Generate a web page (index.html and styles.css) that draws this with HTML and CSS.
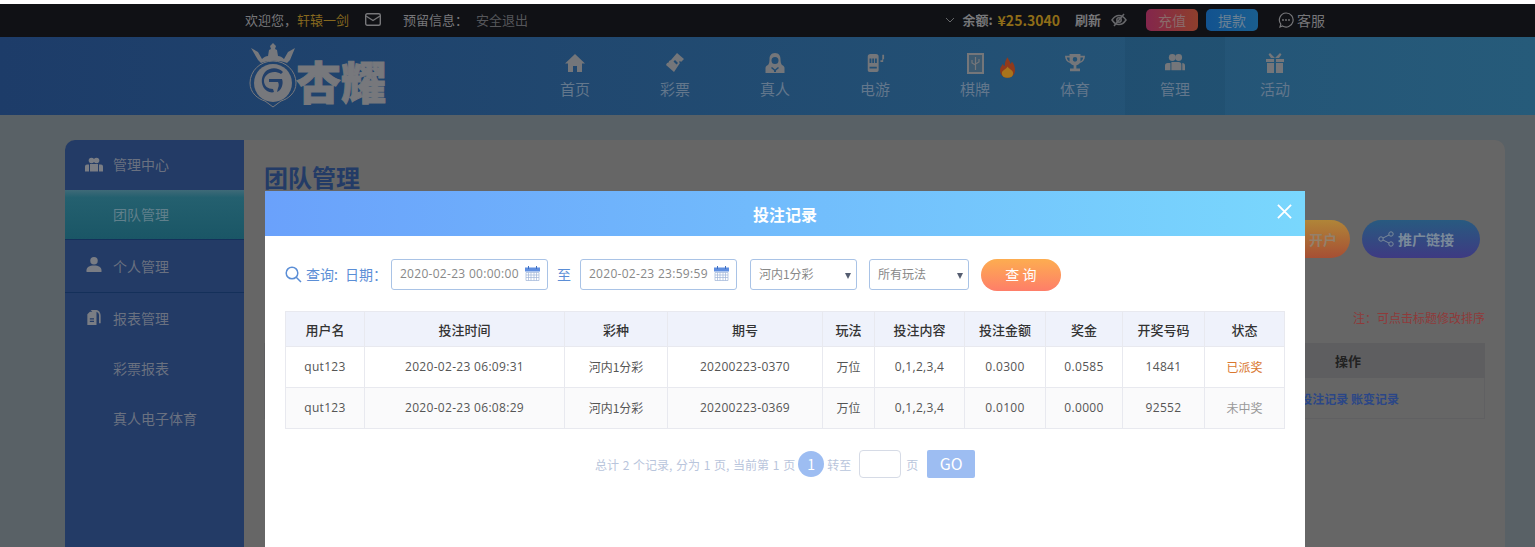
FILE: index.html
```html
<!DOCTYPE html>
<html lang="zh-CN">
<head>
    <meta charset="UTF-8">
    <title>团队管理</title>
    <link rel="stylesheet" href="styles.css">
</head>
<body>
    <!-- 顶部信息条 -->
    <div class="topbar">
        <span class="welcome">欢迎您，<em>轩辕一剑</em></span>
        <svg class="mail" viewBox="0 0 16 13"><rect x="0.7" y="0.7" width="14.6" height="11.6" rx="1.5"/><path d="M1 3l7 4.500L15 3"/></svg>
        <span class="reserve">预留信息：</span>
        <span class="logout">安全退出</span>
        <div class="account">
            <svg class="chev" viewBox="0 0 10 6"><path d="M1 1l4 4 4-4"/></svg>
            <b class="bal-label">余额:</b>
            <b class="money">¥25.3040</b>
            <b class="refresh">刷新</b>
            <svg class="eye" viewBox="0 0 16 14"><path d="M1 7c2-3 4.500-4.500 7-4.500S13 4 15 7c-2 3-4.500 4.500-7 4.500S3 10 1 7z"/><circle cx="8" cy="7" r="2.200"/><path d="M13 1L3 13"/></svg>
            <span class="btn-pay">充值</span>
            <span class="btn-draw">提款</span>
            <svg class="chat" viewBox="0 0 16 16"><path d="M8 1a7 7 0 1 1-3.500 13L2 15l.8-2.800A7 7 0 0 1 8 1z"/><circle class="dot" cx="5" cy="8" r="0.900"/><circle class="dot" cx="8" cy="8" r="0.900"/><circle class="dot" cx="11" cy="8" r="0.900"/></svg>
            <span class="service">客服</span>
        </div>
    </div>

    <!-- 导航 -->
    <div class="nav">
        <div class="logo">
            <svg class="emblem" viewBox="0 0 48 66">
                <path class="fill" d="M2 6l7 4 4 7c2-2 4-3 6-3l1-6 2-1-1-3 3-3 3 3-1 3 2 1 1 6c2 0 4 1 6 3l4-7 7-4-5 12-3 3c-8-3-18-3-26 0l-3-3z"/>
                <path class="ring" d="M24 19c13 0 23 10 23 22 0 10-8 16-15 18l-8 6-8-6C9 57 1 51 1 41c0-12 10-22 23-22z"/>
                <circle class="fill" cx="24" cy="41" r="19"/>
                <path class="hole" d="M34 30c-5-5-13-5-18 0-5 6-4 15 2 19 2 1 5 2 7 1l-1-3c-5 0-9-3-9-8 0-7 9-12 17-7zM20 37h13c2 5-1 12-5 13l1-4c1-2 1-4 0-6h-9z"/>
            </svg>
            <span class="logo-text">杏耀</span>
        </div>
        <a class="nav-item">
            <svg viewBox="0 0 20 20"><path d="M10 1L0 10.500h3V19h5v-6h4v6h5v-8.500h3z"/></svg>
            <span>首页</span>
        </a>
        <a class="nav-item">
            <svg viewBox="0 0 20 20"><path d="M12 0l7 6-3 3-1-1-1 1 1 1-6 9-8-7 1-2c1.500 0 2-1 2-2l2-1zm-2 7l-1.500 1.500 3 3L13 10z" fill-rule="evenodd"/></svg>
            <span>彩票</span>
        </a>
        <a class="nav-item">
            <svg viewBox="0 0 20 20"><path fill-rule="evenodd" d="M10 0c-4 0-5.500 3-5.500 6 0 3-.5 5-1.500 6-1.500.5-2.500 1.500-2.500 3v5h19v-5c0-1.500-1-2.500-2.500-3-1-1-1.500-3-1.500-6 0-3-1.500-6-5.500-6zm0 4a3.500 3.500 0 1 1 0 7 3.500 3.500 0 0 1 0-7zM7 14l3 2.500 3-2.500 1 1-3 2.500V19H9v-1.500L6 15z"/></svg>
            <span>真人</span>
        </a>
        <a class="nav-item">
            <svg viewBox="0 0 22 20"><path fill-rule="evenodd" d="M3 3a3 3 0 0 1 3-3h6a3 3 0 0 1 3 3v15a2 2 0 0 1-2 2H5a2 2 0 0 1-2-2zm2 2v5h2V5zm3 0v5h2V5zm3 0v5h2V5zM5 14v2h8v-2zM19 1h2v5h-1v3h-3V7h2z"/></svg>
            <span>电游</span>
        </a>
        <a class="nav-item">
            <svg class="tile" viewBox="0 0 17 21"><rect class="tile-body" width="17" height="21"/><rect class="tile-face" x="2" y="2" width="13" height="17"/><path class="tile-mark" d="M8.500 4v13M5 7v3l3.500 2M12 6v3l-3.500 2"/></svg>
            <span>棋牌</span>
            <svg class="flame" viewBox="0 0 16 22"><path class="flame-a" d="M8 0c1 3 3 4 3 7 1-.5 1.500-1.500 1.500-2.500C15 7 16 10 16 14c0 5-4 8-8 8s-8-3-8-8c0-3 2-5 3-7 .5 1.500 1 2 2 2.500C5 6 6 3 8 0z"/><path class="flame-b" d="M8 10c1 2 6 4 6 7 0 3-2 5-6 5s-6-2-6-5c0-3 5-4 6-7z"/></svg>
        </a>
        <a class="nav-item">
            <svg viewBox="0 0 22 20"><path fill-rule="evenodd" d="M5 0h12v2h5c0 4-2 7-5.500 8-1 1.500-2.500 2-4 2.500V16h4v3H5.500v-3h4v-3.500c-1.500-.5-3-1-4-2.500C2 9 0 6 0 2h5zM2 4c.3 2 1.200 3.500 3 4.300V4zm15 0v4.300c1.800-.8 2.700-2.300 3-4.300zM11 3.500a2.500 2.500 0 1 0 0 5 2.500 2.500 0 0 0 0-5z"/></svg>
            <span>体育</span>
        </a>
        <a class="nav-item on">
            <svg viewBox="0 0 22 20"><circle cx="8" cy="4" r="3.800"/><circle cx="15" cy="4" r="3.800"/><path d="M3 10h3v8H0v-5a3 3 0 0 1 3-3zM7 9h8a3 3 0 0 1 3 3v6H7zM19 10a3 3 0 0 1 3 3v5h-3z"/></svg>
            <span>管理</span>
        </a>
        <a class="nav-item">
            <svg viewBox="0 0 20 20"><path d="M1 6h8v3H1zM11 6h8v3h-8zM2 10h7v10H2zM11 10h7v10h-7zM5 0l5 5 5-5 1.500 1.500L14 5H6L3.500 1.500z"/></svg>
            <span>活动</span>
        </a>
    </div>

    <!-- 主体 -->
    <div class="page">
        <div class="panel">
            <div class="side">
                <div class="side-item head">
                    <svg viewBox="0 0 18 14"><circle cx="6.500" cy="3" r="2.800"/><circle cx="11.500" cy="3" r="2.800"/><path d="M0 14V9a2 2 0 0 1 2-2h2v7zM14 7h2a2 2 0 0 1 2 2v5h-4zM5 6.500h8V14H5z"/></svg>
                    <span>管理中心</span>
                </div>
                <div class="side-item active"><span>团队管理</span></div>
                <div class="side-item head line">
                    <svg viewBox="0 0 16 16"><circle cx="8" cy="4" r="4"/><path d="M0 16v-2c0-3 3-5 8-5s8 2 8 5v2z"/></svg>
                    <span>个人管理</span>
                </div>
                <div class="side-item head report">
                    <svg viewBox="0 0 16 18"><path fill-rule="evenodd" d="M4 0h6c3 0 6 2 6 7v9h-2V6c0-2-2-4-4-4H6zM0 5l3-3h8v16H0zm3 5v1.500h5V10zm0 3v1.500h5V13z"/></svg>
                    <span>报表管理</span>
                </div>
                <div class="side-item"><span>彩票报表</span></div>
                <div class="side-item"><span>真人电子体育</span></div>
            </div>
            <div class="main">
                <h1>团队管理</h1>
                <div class="main-tools">
                    <span class="btn-open">开户</span>
                    <span class="btn-link">
                        <svg viewBox="0 0 16 16"><circle cx="13" cy="3" r="2.200"/><circle cx="3" cy="8" r="2.200"/><circle cx="13" cy="13" r="2.200"/><path d="M5 7l6-3M5 9l6 3"/></svg>
                        推广链接
                    </span>
                </div>
                <p class="note">注：可点击标题修改排序</p>
                <div class="main-head">操作</div>
                <div class="main-row"><a>投注记录</a> <a>账变记录</a></div>
            </div>
        </div>
    </div>

    <!-- 投注记录弹窗 -->
    <div class="modal">
        <div class="modal-title">
            投注记录
            <svg class="close" viewBox="0 0 16 16"><path d="M1 1l14 14M15 1L1 15"/></svg>
        </div>
        <div class="filter">
            <svg class="search" viewBox="0 0 17 17"><circle cx="7" cy="7" r="5.800"/><path d="M11.200 11.200L16 16"/></svg>
            <span class="q">查询:</span>
            <span class="d">日期：</span>
            <div class="date">2020-02-23 00:00:00
                <svg class="cal" viewBox="0 0 15 15"><rect class="cal-top" x="0" y="1.500" width="15" height="4"/><path class="cal-pin" d="M3.500 0v3M11.500 0v3"/><path class="cal-grid" d="M1 6.500h13v8H1zM1 9h13M1 11.500h13M3.500 6.500v8M6 6.500v8M9 6.500v8M11.500 6.500v8"/></svg>
            </div>
            <span class="to">至</span>
            <div class="date">2020-02-23 23:59:59
                <svg class="cal" viewBox="0 0 15 15"><rect class="cal-top" x="0" y="1.500" width="15" height="4"/><path class="cal-pin" d="M3.500 0v3M11.500 0v3"/><path class="cal-grid" d="M1 6.500h13v8H1zM1 9h13M1 11.500h13M3.500 6.500v8M6 6.500v8M9 6.500v8M11.500 6.500v8"/></svg>
            </div>
            <div class="sel lottery">河内1分彩<i></i></div>
            <div class="sel play">所有玩法<i></i></div>
            <div class="btn-query">查 询</div>
        </div>
        <table class="records">
            <thead>
                <tr><th>用户名</th><th>投注时间</th><th>彩种</th><th>期号</th><th>玩法</th><th>投注内容</th><th>投注金额</th><th>奖金</th><th>开奖号码</th><th>状态</th></tr>
            </thead>
            <tbody>
                <tr><td class="num">qut123</td><td class="num">2020-02-23 06:09:31</td><td>河内1分彩</td><td class="num">20200223-0370</td><td>万位</td><td class="num">0,1,2,3,4</td><td class="num">0.0300</td><td class="num">0.0585</td><td class="num">14841</td><td class="won">已派奖</td></tr>
                <tr><td class="num">qut123</td><td class="num">2020-02-23 06:08:29</td><td>河内1分彩</td><td class="num">20200223-0369</td><td>万位</td><td class="num">0,1,2,3,4</td><td class="num">0.0100</td><td class="num">0.0000</td><td class="num">92552</td><td class="lost">未中奖</td></tr>
            </tbody>
        </table>
        <div class="pager">
            <span class="total">总计 2 个记录, 分为 1 页, 当前第 1 页</span>
            <span class="cur">1</span>
            <span>转至</span>
            <span class="jump"></span>
            <span>页</span>
            <span class="go">GO</span>
        </div>
    </div>
</body>
</html>
```

FILE: styles.css
```css
/* 全体 */
html, body {
    margin: 0;
    padding: 0;
    height: 547px;
    overflow: hidden;
}
body {
    position: relative;
    padding-top: 4px;
    box-sizing: border-box;
    background-color: #fff;
    font-family: "Noto Sans CJK SC", "Liberation Sans", sans-serif;
    font-size: 12px;
}
svg {
    display: block;
}

/* 顶部信息条 */
.topbar {
    height: 33px;
    padding: 0 210px 2px 245px;
    box-sizing: border-box;
    background-color: #101115;
    display: flex;
    align-items: center;
    color: #77777a;
    font-size: 13px;
}
.welcome em {
    font-style: normal;
    color: #86681f;
}
.mail {
    width: 16px;
    height: 13px;
    margin: 0 22px 0 16px;
    fill: none;
    stroke: #77777a;
    stroke-width: 1.4;
}
.logout {
    margin-left: 8px;
    color: #55565a;
}
.account {
    margin-left: auto;
    display: flex;
    align-items: center;
}
.chev {
    width: 10px;
    height: 6px;
    margin-right: 7px;
    fill: none;
    stroke: #66676a;
}
.money {
    margin: 0 15px 0 5px;
    color: #8f6d18;
    font-size: 14px;
}
.eye {
    width: 16px;
    height: 14px;
    margin: 0 19px 0 10px;
    fill: none;
    stroke: #66676a;
    stroke-width: 1.5;
}
.btn-pay, .btn-draw {
    width: 52px;
    height: 22px;
    line-height: 22px;
    border-radius: 5px;
    text-align: center;
    font-size: 14px;
}
.btn-pay {
    background: linear-gradient(90deg, #83264c, #8e3f2c);
    color: #8a6a6a;
}
.btn-draw {
    margin-left: 8px;
    background: linear-gradient(90deg, #12528f, #1a5e8e);
    color: #6b8194;
}
.chat {
    width: 16px;
    height: 16px;
    margin: 0 3px 0 20px;
    fill: none;
    stroke: #77777a;
    stroke-width: 1.2;
}
.chat .dot {
    fill: #77777a;
    stroke: none;
}
.service {
    font-size: 14px;
}

/* 导航 */
.nav {
    height: 78px;
    padding-left: 245px;
    background: linear-gradient(90deg, #1d3c69, #265b7a);
    display: flex;
}
.logo {
    width: 280px;
    display: flex;
    align-items: center;
    color: #77787c;
}
.emblem {
    width: 48px;
    height: 66px;
    margin: 0 0 2px 4px;
}
.emblem .fill {
    fill: #77787c;
}
.emblem .hole {
    fill: #223f69;
}
.emblem .ring {
    fill: none;
    stroke: #77787c;
    stroke-width: 1;
}
.logo-text {
    margin: 8px 0 0 -1px;
    font-size: 45px;
    line-height: 1;
    font-weight: 900;
    -webkit-text-stroke: 1px #77787c;
}
.nav-item {
    position: relative;
    width: 100px;
    padding-top: 16px;
    box-sizing: border-box;
    display: flex;
    flex-direction: column;
    align-items: center;
    color: #63778c;
    font-size: 15px;
}
.nav-item svg {
    width: 20px;
    height: 20px;
    margin-bottom: 6px;
    fill: #74767a;
}
.nav-item span {
    line-height: 20px;
}
.nav-item.on {
    background-color: rgba(20, 60, 90, .15);
}
.nav-item svg.tile {
    width: 17px;
    height: 21px;
    margin-bottom: 5px;
}
.nav-item .tile-face {
    fill: #3d5a70;
}
.nav-item .tile-mark {
    fill: none;
    stroke: #74767a;
    stroke-width: 1.2;
}
.nav-item svg.flame {
    position: absolute;
    left: 75px;
    top: 20px;
    width: 15px;
    height: 21px;
    margin: 0;
}
.nav-item .flame-a {
    fill: #8f3a1c;
}
.nav-item .flame-b {
    fill: #a8741c;
}

/* 主体 */
.page {
    height: 432px;
    padding: 25px 30px 0 65px;
    box-sizing: border-box;
    background-color: #596166;
}
.panel {
    height: 407px;
    border-radius: 10px 10px 0 0;
    overflow: hidden;
    background-color: #666;
    display: flex;
}
.side {
    width: 179px;
    flex: none;
    background-color: #233b66;
    color: #6a7180;
    font-size: 14px;
}
.side-item {
    height: 50px;
    padding: 0 0 2px 48px;
    display: flex;
    align-items: center;
    box-sizing: border-box;
    position: relative;
}
.side-item svg {
    position: absolute;
    left: 20px;
    top: 17px;
    width: 18px;
    height: 15px;
    fill: #7a7d84;
}
.side-item.active {
    background: linear-gradient(180deg, #3f6a78 0, #24606f 15%, #1a5666 100%);
    border-bottom: 1px solid #14305a;
    color: #60808c;
}
.side-item.line {
    height: 53px;
    padding-bottom: 0;
    border-bottom: 1px solid #14305a;
}
.side-item.report {
    height: 51px;
}
.main {
    flex: 1;
    padding: 0 20px;
    color: #222;
}
.main h1 {
    margin: 20px 0 0;
    font-size: 24px;
    line-height: 34px;
    color: #233b66;
}
.main-tools {
    margin: 26px 5px 0 0;
    display: flex;
    justify-content: flex-end;
    gap: 12px;
}
.btn-open, .btn-link {
    height: 38px;
    line-height: 38px;
    border-radius: 19px;
    font-size: 14px;
    font-weight: bold;
    color: #7a8a9a;
}
.btn-open {
    width: 120px;
    padding-right: 13px;
    box-sizing: border-box;
    text-align: right;
    background: linear-gradient(180deg, #b08538, #a64f34);
    color: #94806a;
}
.btn-link {
    width: 118px;
    padding-left: 16px;
    box-sizing: border-box;
    display: flex;
    align-items: center;
    background: linear-gradient(180deg, #285a80, #3e3a82);
}
.btn-link svg {
    width: 16px;
    height: 16px;
    margin-right: 4px;
    fill: none;
    stroke: #7a8a9a;
}
.note {
    margin: 0;
    padding-top: 51px;
    line-height: 17px;
    text-align: right;
    color: #8f3a3a;
}
.main-head {
    margin-top: 17px;
    height: 35px;
    line-height: 35px;
    padding-left: 1071px;
    background-color: #5e5e60;
    font-size: 13px;
    font-weight: bold;
    color: #222;
    white-space: nowrap;
}
.main-row {
    height: 40px;
    line-height: 41px;
    border: 1px solid #606062;
    border-top: 0;
    text-align: right;
    padding-right: 85px;
    font-weight: bold;
    color: #2b4687;
}

/* 弹窗 */
.modal {
    position: absolute;
    left: 265px;
    top: 191px;
    width: 1040px;
    height: 356px;
    background-color: #fff;
}
.modal-title {
    position: relative;
    height: 45px;
    line-height: 46px;
    text-align: center;
    background: linear-gradient(90deg, #6aa1fb, #79d7fd);
    color: #fff;
    font-size: 16px;
    font-weight: bold;
}
.close {
    position: absolute;
    right: 13px;
    top: 13px;
    width: 15px;
    height: 15px;
    fill: none;
    stroke: #fff;
    stroke-width: 2;
}
.filter {
    height: 31px;
    margin-top: 23px;
    padding-left: 20px;
    display: flex;
    align-items: center;
    font-size: 14px;
    color: #5b8ed6;
}
.search {
    width: 17px;
    height: 17px;
    margin-right: 4px;
    fill: none;
    stroke: #5b8ed6;
    stroke-width: 1.500;
}
.q, .d, .to {
    margin-bottom: 2px;
}
.d {
    margin-left: 7px;
    margin-right: 5px;
    width: 41px;
    white-space: nowrap;
}
.date, .sel {
    height: 31px;
    box-sizing: border-box;
    border: 1px solid #a9c3e6;
    border-radius: 3px;
    line-height: 28px;
    color: #888;
    font-size: 12px;
    position: relative;
}
.date {
    width: 157px;
    padding-left: 8px;
    font-family: "Open Sans", "Noto Sans CJK SC", sans-serif;
    letter-spacing: .3px;
    white-space: nowrap;
}
.cal {
    position: absolute;
    right: 7px;
    top: 6px;
    width: 15px;
    height: 15px;
}
.cal-top {
    fill: #5f8ee0;
}
.cal-pin {
    fill: none;
    stroke: #3f6fc0;
}
.cal-grid {
    fill: none;
    stroke: #9fb4d8;
    stroke-width: 0.7;
}
.to {
    width: 32px;
    text-align: center;
    color: #5b8ed6;
}
.sel {
    padding-left: 8px;
}
.sel i {
    position: absolute;
    right: 5px;
    top: 13px;
    border-top: 6px solid #555d70;
    border-left: 3px solid transparent;
    border-right: 3px solid transparent;
}
.lottery {
    width: 107px;
    margin-left: 13px;
}
.play {
    width: 100px;
    margin-left: 12px;
}
.btn-query {
    width: 80px;
    height: 32px;
    line-height: 31px;
    margin-left: 12px;
    border-radius: 16px;
    text-align: center;
    background: linear-gradient(180deg, #fdad50, #fe7e69);
    color: #fff;
    font-size: 14px;
}

/* 表格 */
.records {
    margin: 21px 0 0 20px;
    width: 999px;
    table-layout: fixed;
    border-collapse: collapse;
    color: #555;
    text-align: center;
}
.records th, .records td {
    border: 1px solid #e8e9ef;
    padding: 0;
    font-weight: normal;
}
.records th {
    height: 34px;
    background-color: #eff2fb;
    color: #333;
    font-size: 13px;
    font-weight: 500;
}
.records td {
    height: 39px;
    padding-bottom: 1px;
}
.records .num {
    font-family: "Open Sans", "Noto Sans CJK SC", sans-serif;
    letter-spacing: .3px;
}
.records tbody tr:nth-child(2) td {
    background-color: #fafafb;
}
.records th:nth-child(1) { width: 78px; }
.records th:nth-child(2) { width: 199px; }
.records th:nth-child(3) { width: 102px; }
.records th:nth-child(4) { width: 154px; }
.records th:nth-child(5) { width: 51px; }
.records th:nth-child(6) { width: 89px; }
.records th:nth-child(7) { width: 80px; }
.records th:nth-child(8) { width: 76px; }
.records th:nth-child(9) { width: 81px; }
.records th:nth-child(10) { width: 79px; }
.records .won {
    color: #d9772f;
}
.records .lost {
    color: #999;
}

/* 分页 */
.pager {
    margin-top: 21px;
    padding-left: 330px;
    display: flex;
    align-items: center;
    color: #b9c5dc;
    height: 28px;
}
.total {
    word-spacing: 1px;
}
.cur {
    width: 26px;
    height: 26px;
    line-height: 26px;
    margin: 0 3px;
    border-radius: 50%;
    text-align: center;
    background-color: #9dbdf2;
    color: #fff;
    font-size: 14px;
}
.jump {
    width: 40px;
    height: 26px;
    margin: 0 5px 0 8px;
    border: 1px solid #d6dbe6;
    border-radius: 4px;
}
.go {
    width: 48px;
    height: 28px;
    line-height: 27px;
    margin-left: 9px;
    border-radius: 2px;
    text-align: center;
    background-color: #9dbdf2;
    color: #fff;
    font-size: 16px;
}
```
